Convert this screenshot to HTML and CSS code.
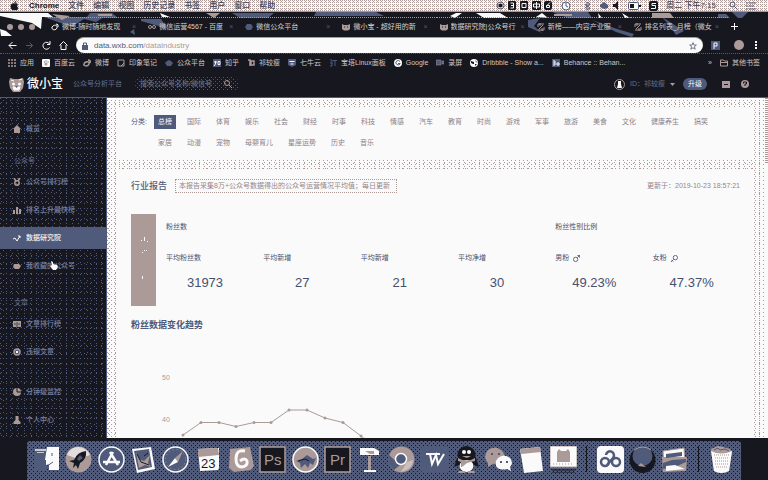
FILE: index.html
```
<!DOCTYPE html>
<html lang="zh-CN">
<head>
<meta charset="utf-8">
<meta name="viewport" content="width=device-width, initial-scale=1">
<title>微小宝 - 数据研究院</title>
<link rel="stylesheet" href="styles.css">
</head>
<body>
<header class="menubar">
  <svg class="apple" width="9" height="10" viewBox="0 0 9 10"><path d="M4.500 2.600C5.500 2 7.300 2 8 3.200C6.600 4.200 6.900 6 8.300 6.700C7.700 8.400 6.700 9.700 5.700 9.300C4.800 8.900 4.300 8.900 3.500 9.300C2.200 9.800.6 7.500.6 5.400C.6 2.800 2.800 1.800 4.500 2.600ZM4.400 2.100C4.300 1 5.200.2 6.200 0C6.300 1.200 5.500 2 4.400 2.100Z"/></svg>
  <nav class="menus"><b>Chrome</b><span>文件</span><span>编辑</span><span>视图</span><span>历史记录</span><span>书签</span><span>用户</span><span>窗口</span><span>帮助</span></nav>
  <div class="status">
    <svg width="9" height="9" viewBox="0 0 9 9"><circle cx="4.500" cy="4.500" r="3.500" fill="none" stroke="#505a7a"/><circle cx="4.500" cy="4.500" r="2"/></svg>
    <svg width="9" height="9" viewBox="0 0 9 9"><rect width="8" height="9" rx="1"/><path d="M2.500 2h3v5h-3M3 4.500h2" stroke="#fafafa" fill="none"/></svg>
    <svg width="9" height="9" viewBox="0 0 9 9"><rect width="8" height="9" rx="1"/><path d="M2 2.500h4v4H2z" stroke="#fafafa" fill="none"/></svg>
    <svg width="9" height="9" viewBox="0 0 9 9"><rect width="9" height="9" rx="1"/><path d="M1.500 3h6v3h-6zM4.500 1v7" stroke="#fafafa" fill="none"/></svg>
    <svg width="9" height="9" viewBox="0 0 9 9"><rect width="8" height="9" rx="2"/><path d="M6 1.500L3 4.500M2.500 4.500h3v2h-3z" stroke="#fafafa" fill="none"/></svg>
    <svg class="wide" width="10" height="10" viewBox="0 0 10 10"><circle cx="5" cy="5" r="4" fill="#fafafa" stroke="#505a7a"/><path d="M5 2v3l2 1" stroke="#505a7a" fill="none"/></svg>
    <svg class="wide" width="7" height="10" viewBox="0 0 7 10"><path d="M1 3l5 4-3 2V1l3 2-5 4" stroke="#505a7a" fill="none"/></svg>
    <svg width="10" height="9" viewBox="0 0 10 9"><path d="M1 4l4-3 4 3v3L5 8 1 6z" fill="#505a7a"/></svg>
    <svg width="8" height="9" viewBox="0 0 8 9"><path d="M1 3h2l3-3v9L3 6H1z"/></svg>
    <svg class="wide" width="13" height="8" viewBox="0 0 13 8"><rect x=".5" y=".5" width="10" height="7" rx="1" fill="#fafafa" stroke="#505a7a"/><path d="M2 2h4v4H2zM11 3h2v2h-2z"/></svg>
    <svg width="9" height="10" viewBox="0 0 9 10"><rect width="9" height="10" rx="2"/><path d="M7 2.500H3v2h3.500v3H2" stroke="#fafafa" fill="none"/></svg>
    <time>周二 下午7:15</time>
    <svg class="wide" width="9" height="9" viewBox="0 0 9 9"><circle cx="3.500" cy="3.500" r="2.500" fill="none" stroke="#505a7a"/><path d="M5.500 5.500L8.500 8.500" stroke="#505a7a"/></svg>
    <svg width="10" height="8" viewBox="0 0 10 8"><path d="M0 1h2M3 1h7M0 4h2M3 4h5M0 7h2M3 7h7" stroke="#505a7a"/></svg>
  </div>
</header>

<section class="tabstrip">
  <svg class="wallpaper" viewBox="0 0 768 25" preserveAspectRatio="none" aria-hidden="true">
    <path fill="#fafafa" d="M0 1h48l5 4H42l-1 12-9-6-18-4-14-3zM0 17l6 2 6 5H1zM160 1l10 4h-8zM450 4l6-3h6l-7 5zM476 1h24l8 5h-24zM536 5l6-4 6 5zM598 1l4 5h-3zM622 1l8 5h-5z"/>
    <path fill="#505a7a" d="M90 1h22l6 5H86zM44 5h60l-8 5-12-3-12 8zM141 7h20l7 10-13-4-14-4zM130 20l4-3 1 6zM232 1h42l-6 5h-28zM316 0h60l8 4h-70zM552 0h36l4 6h-24zM528 8l12-2-6 8 8 7-14-6zM592 8l22 8 20 6-2 3-16-5zM662 5l22 14-8 4-6-9zM732 0h16l-6 6h-4zM718 2h8l4 4h-12z"/>
    <path fill="#ab9a98" d="M52 2l18 2-8 4zM98 2h14v2H98zM206 1h14l-6 5zM554 2h18v2h-18zM652 1h18l4 5h-22z"/>
  </svg>
  <div class="lights"><i></i><i></i><i></i></div>
  <div class="tabs">
    <button class="tab"><svg viewBox="0 0 8 8"><path d="M1 4c2-3 6-2 5 1s-6 2-5-1M5 1q3 0 2 3" fill="none" stroke="#fafafa"/></svg><span>微博-随时随地发现</span><em>×</em></button>
    <button class="tab"><svg viewBox="0 0 8 8"><circle cx="2" cy="4" r="1.500" fill="none" stroke="#ab9a98"/><circle cx="6" cy="4" r="1.500" fill="none" stroke="#ab9a98"/></svg><span>微信运营4567 - 百度</span><em>×</em></button>
    <button class="tab"><svg viewBox="0 0 8 8"><path d="M0 4l2-3h4l2 3-2 3H2z" fill="#505a7a"/></svg><span>微信公众平台</span><em>×</em></button>
    <button class="tab"><svg viewBox="0 0 8 8"><path d="M0 1l2 1h4l2-1v5L6 7.500H2L0 6z" fill="#ab9a98"/><path d="M2 4h1M5 4h1" stroke="#17181f"/></svg><span>微小宝 - 超好用的新</span><em>×</em></button>
    <button class="tab"><svg viewBox="0 0 8 8"><path d="M0 1l2 1h4l2-1v5L6 7.500H2L0 6z" fill="#ab9a98"/><path d="M2 4h1M5 4h1" stroke="#17181f"/></svg><span>数据研究院|公众号行</span><em>×</em></button>
    <button class="tab"><svg viewBox="0 0 8 8"><path d="M1 4V1h6M7 4v3H1M3 0v3M5 5v3M6 2L2 6" fill="none" stroke="#ab9a98"/></svg><span>新榜——内容产业服</span><em>×</em></button>
    <button class="tab"><svg viewBox="0 0 8 8"><path d="M1 4V1h6M7 4v3H1M3 0v3M5 5v3M6 2L2 6" fill="none" stroke="#ab9a98"/></svg><span>排名列表_月榜（微女</span><em>×</em></button>
  </div>
  <button class="newtab" aria-label="新标签页"><svg width="7" height="7" viewBox="0 0 7 7"><path d="M3.500 0v7M0 3.500h7" stroke="#fafafa"/></svg></button>
</section>

<section class="toolbar">
  <div class="nav">
    <button aria-label="后退"><svg viewBox="0 0 9 9"><path d="M8.500 4.500H1M4.500 1L1 4.500 4.500 8" fill="none" stroke="#fafafa"/></svg></button>
    <button aria-label="前进"><svg viewBox="0 0 9 9"><path d="M1 4.500h7M4.500 1.500l3 3-3 3" fill="none" stroke="#505a7a"/></svg></button>
    <button aria-label="刷新"><svg viewBox="0 0 9 9"><path d="M7.500 3A3.500 3.500 0 1 0 7.500 6.500M8 0v3.500H5" fill="none" stroke="#fafafa"/></svg></button>
    <button aria-label="主页"><svg viewBox="0 0 9 9"><path d="M.5 4.500l4-4 4 4M2 4v4.500h5V4" fill="none" stroke="#fafafa"/></svg></button>
  </div>
  <form class="address">
    <svg width="6" height="8" viewBox="0 0 6 8"><path d="M1.500 4V1h3v3" fill="none" stroke="#505a7a"/><path d="M0 3h6v5H0z" fill="#505a7a"/></svg>
    <label class="url"><span><b>data.wxb.com</b>/dataindustry</span><input type="text" aria-label="地址"></label>
    <svg width="8" height="8" viewBox="0 0 10 10"><path d="M5 .8l1.200 3h3L6.800 5.800l.9 3.200L5 7.200 2.300 9l.9-3.200L.8 3.800h3z" fill="none" stroke="#505a7a"/></svg>
  </form>
  <svg class="ext" width="9" height="9" viewBox="0 0 9 9"><path d="M0 0h9v9H0z" fill="#505a7a"/><path d="M3 8V2h3v3H3" fill="none" stroke="#fafafa"/></svg>
  <i class="me"></i>
  <svg width="2" height="8" viewBox="0 0 2 8"><path d="M0 0h2v2H0zM0 3h2v2H0zM0 6h2v2H0z" fill="#fafafa"/></svg>
</section>

<nav class="bookmarks">
  <a href="#"><svg viewBox="0 0 8 8"><path d="M0 1h8M0 4h8M0 7h8" stroke="#ab9a98" stroke-width="1.500" stroke-dasharray="2 1"/></svg>应用</a>
  <a href="#"><svg viewBox="0 0 8 8"><rect width="8" height="8" rx="1" fill="#fafafa"/><circle cx="4" cy="5" r="1.500" fill="#ab9a98"/><path d="M2 3h1M3.500 2h1M5.500 3h1" stroke="#505a7a"/></svg>百度云</a>
  <a href="#"><svg viewBox="0 0 8 8"><path d="M1 5c1-3 6-3 5 0s-6 2-5 0M5 1q3 0 2 3" fill="none" stroke="#ab9a98" stroke-width="1.500"/></svg>微博</a>
  <a href="#"><svg viewBox="0 0 8 8"><path d="M1 1h6v6H1zM4 7l3-3" fill="none" stroke="#ab9a98"/></svg>印象笔记</a>
  <a href="#"><svg viewBox="0 0 8 8"><path d="M0 4l2-2 2-1 2 1 2 2-2 3H2z" fill="#505a7a"/></svg>公众平台</a>
  <a href="#"><svg viewBox="0 0 8 8"><path d="M0 0h8v8H0z" fill="#505a7a"/><path d="M1 3h3M2.500 2v3L1 7M5 2.500h2v3H5z" fill="none" stroke="#fafafa"/></svg>知乎</a>
  <a href="#"><svg viewBox="0 0 8 8"><path d="M1 1h2v6M4 2h3v4H4z" fill="none" stroke="#ab9a98" stroke-width="1.500"/></svg>祁较瘦</a>
  <a href="#"><svg viewBox="0 0 8 8"><path d="M0 0h8v6L4 8 0 6z" fill="#505a7a"/><path d="M1.500 2.500h5M2.500 5h3" stroke="#fafafa"/></svg>七牛云</a>
  <a href="#"><svg viewBox="0 0 8 8"><path d="M1 1h2v6H1M1 4h2M4 1.500h4M6 1v6" fill="none" stroke="#505a7a"/></svg>宝塔Linux面板</a>
  <a href="#"><svg viewBox="0 0 8 8"><circle cx="4" cy="4" r="4" fill="#fafafa"/><path d="M6 2.500a2.200 2.200 0 1 0 .2 2H4" fill="none" stroke="#505a7a"/></svg>Google</a>
  <a href="#"><svg viewBox="0 0 8 8"><path d="M0 1h5v5H0zM6 2h2v3H6z" fill="#505a7a" stroke="#ab9a98" stroke-width=".5"/></svg>录屏</a>
  <a href="#"><svg viewBox="0 0 8 8"><circle cx="4" cy="4" r="4" fill="#fafafa"/><path d="M1 2l3 1v2H3L1 4M5 1l1 2 2 1M5 5h2L5 7z" fill="#17181f"/></svg>Dribbble - Show a...</a>
  <a href="#"><svg viewBox="0 0 8 8"><path d="M0 0h8v8H0z" fill="#505a7a"/><path d="M1 2h2v4H1M1 4h2M5 4h2v2H5z" fill="none" stroke="#fafafa"/></svg>Behance :: Behan...</a>
  <span class="more">»</span>
  <a href="#"><svg viewBox="0 0 8 8"><path d="M.5 1h3l1 1h3v5h-7zM.5 3.500h7" fill="none" stroke="#ab9a98"/></svg>其他书签</a>
</nav>

<header class="site">
  <svg width="15" height="15" viewBox="0 0 15 15"><path d="M1 1l4 1h5l4-1 1 4-1 6-3 4H4L1 11 0 5z" fill="#ab9a98"/><path d="M2 3l3 1M10 3l3-1M4 10h7l-1 3H5z" fill="#fafafa" stroke="#fafafa"/><circle cx="4.500" cy="7" r="1.500" fill="#fafafa"/><circle cx="10.500" cy="7" r="1.500" fill="#fafafa"/><path d="M6 9h3l-1.500 2z" fill="#505a7a"/></svg>
  <strong>微小宝</strong>
  <span class="tagline">公众号分析平台</span>
  <form class="search">
    <input type="text" placeholder="搜索公众号名称/微信号" aria-label="搜索公众号">
    <svg width="8" height="8" viewBox="0 0 8 8"><circle cx="3" cy="3" r="2.500" fill="none" stroke="#ab9a98"/><path d="M5 5l3 3" stroke="#ab9a98"/></svg>
  </form>
  <div class="user">
    <svg width="11" height="11" viewBox="0 0 11 11"><circle cx="5.500" cy="5.500" r="5" fill="#17181f" stroke="#ab9a98"/><path d="M4 2h3v3l1 4H3l1-4z" fill="#fafafa"/></svg>
    <span>ID：祁较瘦</span>
    <svg width="5" height="3" viewBox="0 0 5 3"><path d="M0 0h5L2.500 3z" fill="#ab9a98"/></svg>
    <button class="upgrade">升级</button>
    <svg class="msg" width="8" height="7" viewBox="0 0 8 7"><path d="M0 0h8v7H0z" fill="#ab9a98"/><path d="M2 3.500h4" stroke="#17181f"/></svg>
    <svg width="8" height="8" viewBox="0 0 8 8"><circle cx="4" cy="4" r="4" fill="#ab9a98"/><path d="M2.500 3.500V2h3v2H4v2" fill="none" stroke="#17181f"/></svg>
  </div>
</header>

<div class="workspace">
  <nav class="sidebar">
    <a href="#"><svg viewBox="0 0 8 8"><path d="M0 4l4-4 4 4H7v4H1V4z"/></svg>概览</a>
    <h2>公众号</h2>
    <a href="#"><svg viewBox="0 0 8 8"><path d="M1 0l2 3M7 0L5 3" stroke="#ab9a98" stroke-width="1.500"/><circle cx="4" cy="5" r="2.200" fill="none" stroke="#ab9a98" stroke-width="1.500"/></svg>公众号排行榜</a>
    <a href="#"><svg viewBox="0 0 8 8"><path d="M0 4h2v4H0zM3 1h2v7H3zM6 3h2v5H6z"/></svg>排名上升最快榜</a>
    <a class="active" href="#" aria-current="page"><svg viewBox="0 0 8 8"><path d="M0 5l2-1 2 3 3-5M5 2h2v2" fill="none" stroke="#fafafa"/></svg>数据研究院</a>
    <a href="#" class="fav"><svg viewBox="0 0 8 8"><path d="M1 2h5l2 2-2 3H2L0 5z"/></svg>我收藏的公众号
      <svg class="cursor" viewBox="0 0 8 9"><path d="M1 0l2 1v2l4 1 1 2-2 3H3L0 5l2-1z" fill="#fafafa"/></svg></a>
    <h2>文章</h2>
    <a href="#"><svg viewBox="0 0 8 8"><path d="M0 1h8v6H0z"/><path d="M4 2v5M2 3v2M6 3v2" stroke="#17181f" stroke-width=".7"/></svg>文章排行榜</a>
    <a href="#"><svg viewBox="0 0 8 8"><circle cx="4" cy="4" r="3" fill="#505a7a" stroke="#ab9a98" stroke-width="1.500"/><path d="M3 3h2v2H3z" fill="#fafafa"/></svg>违规文章</a>
    <a class="apart" href="#"><svg viewBox="0 0 8 8"><circle cx="4" cy="4" r="4"/><path d="M4 0v4h4" fill="none" stroke="#17181f"/></svg>分钟级监控</a>
    <a href="#"><svg viewBox="0 0 8 8"><path d="M2.500 0h3v4l2 2v2h-7V6l2-2z"/></svg>个人中心</a>
  </nav>
  <main>
    <section class="card filter">
      <span class="filter-name">分类:</span>
      <div class="chips"><button class="on">总榜</button><button>国际</button><button>体育</button><button>娱乐</button><button>社会</button><button>财经</button><button>时事</button><button>科技</button><button>情感</button><button>汽车</button><button>教育</button><button>时尚</button><button>游戏</button><button>军事</button><button>旅游</button><button>美食</button><button>文化</button><button>健康养生</button><button>搞笑</button><button>家居</button><button>动漫</button><button>宠物</button><button>母婴育儿</button><button>星座运势</button><button>历史</button><button>音乐</button></div>
    </section>
    <section class="card report">
      <header><h1>行业报告</h1><p>本报告采集8万+公众号数据得出的公众号运营情况平均值；每日更新</p><time>更新于：2019-10-23 18:57:21</time></header>
      <div class="summary">
        <div class="block"><svg width="10" height="46" viewBox="0 0 10 46"><path d="M5 0h1v4H5zM2 3h1v1H2zM8 4h1v1H8zM5 13h1v1H5zM7 13h1v1H7zM3 15h1v1H3zM3 39h1v3H3z" fill="#fafafa"/></svg></div>
        <dl class="stats">
          <div class="group wide4"><h3>粉丝数</h3></div>
          <div class="group wide2"><h3>粉丝性别比例</h3></div>
          <div><dt>平均粉丝数</dt><dd>31973</dd></div>
          <div><dt>平均新增</dt><dd>27</dd></div>
          <div><dt>平均新增</dt><dd>21</dd></div>
          <div><dt>平均净增</dt><dd>30</dd></div>
          <div><dt>男粉 <svg viewBox="0 0 8 8"><circle cx="3" cy="5" r="2.500"/><path d="M5 3l2.500-2.500M5 .5h2.500V3"/></svg></dt><dd>49.23%</dd></div>
          <div><dt>女粉 <svg viewBox="0 0 8 8"><circle cx="5" cy="3" r="2.500"/><path d="M3 5L0 8M.5 5.500l2 2"/></svg></dt><dd>47.37%</dd></div>
        </dl>
      </div>
      <h2>粉丝数据变化趋势</h2>
      <svg class="chart" width="610" height="120" viewBox="0 0 610 120">
        <text x="31" y="44">50</text><text x="31" y="86">40</text>
        <path d="M52 99L70 86.500H88L105 90.500L123 86.500H140L158 74H176L194 82L212 86.500L230 100L248 115"/>
        <g><circle cx="52" cy="99" r="1.500"/><circle cx="70" cy="86.500" r="1.500"/><circle cx="88" cy="86.500" r="1.500"/><circle cx="105" cy="90.500" r="1.500"/><circle cx="123" cy="86.500" r="1.500"/><circle cx="140" cy="86.500" r="1.500"/><circle cx="158" cy="74" r="1.500"/><circle cx="176" cy="74" r="1.500"/><circle cx="194" cy="82" r="1.500"/><circle cx="212" cy="86.500" r="1.500"/><circle cx="230" cy="100" r="1.500"/></g>
      </svg>
    </section>
  </main>
  <i class="thumb"></i>
</div>

<footer class="dock">
  <svg viewBox="0 0 27 27"><path d="M1 2h12v23H2z" fill="#505a7a"/><path d="M2 3h11v2H2zM4 6h7v1H4z" fill="#fafafa" opacity=".7"/><path d="M14 1h12v23H16v-5h-3v-5h-1z" fill="#fafafa"/><path d="M19 7v3M4 17q8 6 16-1" stroke="#505a7a" fill="none"/></svg>
  <svg viewBox="0 0 27 27"><circle cx="13.500" cy="13.500" r="13" fill="#ab9a98"/><path d="M2 9Q5 1 13 1t12 8l-12 4z" fill="#fafafa" opacity=".7"/><path d="M21 5q-9 1-12 9l-5 1 5 2-1 5 3-3 2 4 2-6q7-4 6-12z" fill="#17181f"/><path d="M15 9l3 3-4 3-2-2z" fill="#505a7a"/></svg>
  <svg viewBox="0 0 27 27"><circle cx="13.500" cy="13.500" r="12.500" fill="#505a7a" stroke="#fafafa" stroke-width="1.500"/><path d="M15 6L8 19M12 6l8 13M5 16h17" fill="none" stroke="#fafafa" stroke-width="2.500"/></svg>
  <svg viewBox="0 0 27 27"><path d="M2 3l19-2 4 22-18 4z" fill="#fafafa"/><path d="M4 5l15-2 3 18-14 3z" fill="#505a7a"/><path d="M6 6l3 7 5 2 6-6-2 8 3 4-6-2-6 3z" fill="#ab9a98"/><path d="M7 8l4 8 8 3M14 10l4-3" stroke="#17181f" fill="none"/></svg>
  <svg viewBox="0 0 27 27"><circle cx="13.500" cy="13.500" r="12.500" fill="#505a7a" stroke="#fafafa" stroke-width="1.500"/><path d="M21 5l-5 11-3-4z" fill="#ab9a98"/><path d="M13 12l3 4-10 5z" fill="#fafafa"/><circle cx="13.500" cy="13.500" r="10" fill="none" stroke="#ab9a98" stroke-dasharray="1 3"/></svg>
  <svg viewBox="0 0 27 27"><path d="M3 3l21-1v20l-1 2-18 1z" fill="#fafafa"/><path d="M3 3l20-1 1 7-21 2z" fill="#ab9a98"/><text x="6" y="22" font-size="13" fill="#17181f">23</text></svg>
  <svg viewBox="0 0 27 27"><path d="M3 3l20-2 4 19-3 4-17 2-5-4z" fill="#ab9a98"/><path d="M18 5q-9-2-9 8 0 8 6 8 6-1 5-6-2-4-7 0" fill="none" stroke="#fafafa" stroke-width="3"/></svg>
  <svg viewBox="0 0 27 27"><rect x="1" y="1" width="25" height="25" fill="#17181f" stroke="#ab9a98" stroke-width="1.500"/><text x="5" y="19" font-size="15" fill="#ab9a98">Ps</text></svg>
  <svg viewBox="0 0 27 27"><circle cx="13.500" cy="13.500" r="12.500" fill="#ab9a98" stroke="#fafafa" stroke-width="1.500"/><path d="M4 15l6-2 5-4 6 4 3-1-3 7-3-2-2 5-3-4-4 4-1-5z" fill="#505a7a"/><path d="M6 15l7-2 4 2" stroke="#17181f" fill="none"/></svg>
  <svg viewBox="0 0 27 27"><rect x="1" y="1" width="25" height="25" fill="#17181f" stroke="#ab9a98" stroke-width="1.500"/><text x="6" y="19" font-size="15" fill="#ab9a98">Pr</text></svg>
  <svg viewBox="0 0 27 27"><path d="M4 2h14l5 3v4H4z" fill="#fafafa"/><path d="M9 5h9v3h-4z" fill="#ab9a98"/><path d="M12 10h3v14h-3z" fill="#ab9a98"/><path d="M8 24h12v2H8z" fill="#fafafa"/></svg>
  <svg viewBox="0 0 27 27"><circle cx="13.500" cy="13.500" r="13" fill="#ab9a98"/><path d="M1 9Q-2 18 6 24l6-5z" fill="#505a7a"/><path d="M25 14q0 9-12 12l6-10z" fill="#fafafa" opacity=".4"/><circle cx="13" cy="13" r="5.500" fill="#505a7a" stroke="#fafafa" stroke-width="1.500"/></svg>
  <svg viewBox="0 0 27 27"><rect width="27" height="27" rx="3" fill="#505a7a"/><path d="M5 8h4l2 10 4-9 2 9 6-10M9 8h10" fill="none" stroke="#fafafa" stroke-width="2"/></svg>
  <svg viewBox="0 0 27 27"><ellipse cx="13.500" cy="9" rx="9" ry="9" fill="#17181f"/><path d="M4 12h19l3 9-5-2-2 6H8l-2-6-5 2z" fill="#17181f"/><ellipse cx="13.500" cy="20" rx="7" ry="6" fill="#fafafa"/><path d="M5 12q9 5 17 0v3l-8 2-5 4H8v-5l-3-1zM6 25h6v2H5zM15 25h6l1 2h-7z" fill="#ab9a98"/><circle cx="11" cy="6" r="2" fill="#fafafa"/><circle cx="16" cy="6" r="2" fill="#fafafa"/><path d="M9 10h9l-4 2z" fill="#ab9a98"/></svg>
  <svg viewBox="0 0 27 27"><path d="M3 4q8-6 15 2 4 6-3 11l-7 1-5 3V17q-6-6 0-13z" fill="#ab9a98"/><path d="M13 12q6-5 12 0 4 5 0 9l1 4-4-2q-8 2-11-3-1-5 2-8z" fill="#fafafa"/><path d="M6 7h2v2H6zM13 7h2v2h-2zM15 15h2v2h-2zM21 15h2v2h-2z" fill="#505a7a"/></svg>
  <svg viewBox="0 0 27 27"><path d="M2 3l20-2 3 24-19 2z" fill="#fafafa"/><path d="M2 3l20-2 1 5L3 8z" fill="#ab9a98"/></svg>
  <svg viewBox="0 0 27 27"><path d="M0 0h27v21H0z" fill="#fafafa" stroke="#ab9a98"/><path d="M7 16V6l2-3 2 2h5l2-2 2 3v10z" fill="#ab9a98"/><path d="M2 24h23M2 27h23" stroke="#17181f"/><path d="M3 18h21" stroke="#ab9a98" stroke-dasharray="1 2"/></svg>
  <i></i>
  <svg viewBox="0 0 27 27"><rect width="27" height="27" rx="4" fill="#fafafa"/><g fill="none" stroke="#505a7a" stroke-width="2.500"><circle cx="8" cy="16" r="4"/><circle cx="19" cy="16" r="4"/><path d="M9 9a4 4 0 1 1 7 3l-6 7"/></g></svg>
  <svg viewBox="0 0 27 27"><circle cx="13.500" cy="14" r="13" fill="#17181f"/><circle cx="13.500" cy="10" r="10" fill="#505a7a"/><path d="M5 4q9-6 17 0" fill="none" stroke="#ab9a98"/><path d="M9 20l3-3 5 4z" fill="#ab9a98"/></svg>
  <svg viewBox="0 0 27 27"><path d="M2 5l21-3 1 16-21 4z" fill="#fafafa" stroke="#ab9a98"/><path d="M1 11h25l-1 14-23 1z" fill="#ab9a98"/><path d="M5 8l16-2v4L5 12zM2 17l9-3 14-1v3l-11 5-12 2z" fill="#505a7a"/><path d="M5 20l9-1 10 4-19 2z" fill="#fafafa"/></svg>
  <i></i>
  <svg viewBox="0 0 27 27"><path d="M3 3l7-3 5 1 7 2 2 3-3 19q-8 4-15 0z" fill="#ab9a98"/><path d="M3 5q10 5 21 0l-3 20q-8 4-15 0z" fill="#fafafa"/><path d="M6 9h15M7 12h14M7 15h13M7 18h13M8 21h11" stroke="#ab9a98" stroke-dasharray="1 1"/><path d="M6 4l4-2 2 2 5-1 4 2" fill="none" stroke="#505a7a"/></svg>
</footer>
</body>
</html>
```

FILE: styles.css
```
:root {
  --ink: #17181f;
  --blue: #505a7a;
  --taupe: #ab9a98;
  --paper: #fafafa;
}

* { box-sizing: border-box; }

body {
  margin: 0;
  height: 100vh;
  display: flex;
  flex-direction: column;
  overflow: hidden;
  background: var(--ink);
  color: var(--blue);
  font: 7px/10px "Liberation Sans", "Noto Sans CJK SC", sans-serif;
}

h1, h2, h3, p, dl, dd, form { margin: 0; }
a { color: inherit; text-decoration: none; }
button, input { font: inherit; color: inherit; background: none; border: 0; padding: 0; }
svg { flex: none; display: block; }
em, i { font-style: normal; }

/* System menu bar */
.menubar {
  flex: none;
  height: 12px;
  display: flex;
  align-items: center;
  padding: 0 12px 0 10px;
  font-size: 8px;
  font-weight: 500;
  color: #3c4460;
  border-bottom: 1px solid var(--taupe);
  background-color: var(--paper);
  background-image: conic-gradient(at 1px 1px, transparent 75%, var(--taupe) 0), conic-gradient(at 1px 1px, transparent 75%, var(--taupe) 0);
  background-size: 2px 2px, 4px 4px;
  background-position: 0 0, 1px 1px;
}
.menubar svg { fill: var(--ink); }
.menus { display: flex; gap: 9px; margin-left: 10px; }
.menus b { color: var(--ink); }
.status { display: flex; align-items: center; gap: 3px; margin-left: auto; }
.status .wide { margin: 0 5px; }
.status time { margin: 0 5px; }

/* Browser tabs */
.tabstrip {
  flex: none;
  height: 25px;
  display: flex;
  align-items: center;
  padding-top: 4px;
  padding-left: 7px;
  position: relative;
}
.wallpaper { position: absolute; inset: 0; width: 100%; height: 100%; z-index: -1; }
.lights { display: flex; gap: 5px; width: 41px; }
.lights i { width: 6px; height: 6px; border-radius: 50%; background: var(--taupe); }
.tabs { display: flex; flex: 0 1 680px; min-width: 0; }
.tab {
  flex: 1 1 0;
  min-width: 0;
  height: 19px;
  display: flex;
  align-items: center;
  gap: 3px;
  padding: 0 9px 0 3px;
  color: #d8d0d0;
  border-top: 1px dotted var(--taupe);
}
.tab svg { width: 8px; height: 8px; }
.tab span { flex: 1; overflow: hidden; white-space: nowrap; text-align: left; }
.tab em { color: var(--blue); }
.newtab { margin-left: 3px; }

/* Address row */
.toolbar { flex: none; height: 16px; display: flex; align-items: center; padding-right: 11px; }
.nav { display: flex; gap: 8px; padding: 0 8px; }
.nav svg { width: 9px; height: 9px; }
.address {
  flex: 1;
  height: 16px;
  display: flex;
  align-items: center;
  gap: 6px;
  padding: 0 6px;
  border-radius: 8px;
  border-top: 1px solid var(--taupe);
  background: var(--paper);
}
.url { flex: 1; display: flex; font-size: 8px; color: var(--taupe); }
.url b { font-weight: 400; color: var(--blue); }
.url input { flex: 1; min-width: 0; outline: 0; }
.ext { margin: 0 14px 0 8px; }
.me { width: 10px; height: 10px; border-radius: 50%; background: var(--taupe); margin-right: 11px; }

/* Bookmarks */
.bookmarks {
  flex: none;
  height: 18px;
  display: flex;
  align-items: center;
  gap: 8px;
  padding: 0 8px;
  color: #d0c6c5;
  white-space: nowrap;
  border-top: 1px dotted var(--blue);
}
.bookmarks a { display: flex; align-items: center; gap: 4px; }
.bookmarks svg { width: 8px; height: 8px; }
.more { margin-left: auto; }

/* Site header */
.site { flex: none; height: 27px; display: flex; align-items: center; padding: 0 19px 0 9px; border-bottom: 1px solid var(--blue); }
.site strong { margin-left: 3px; font-size: 12px; line-height: 16px; font-weight: 500; color: var(--paper); }
.tagline { margin-left: 10px; color: #66708f; }
.search {
  display: flex;
  align-items: center;
  width: 104px;
  height: 14px;
  margin-left: 13px;
  padding: 0 7px 0 5px;
  border-radius: 7px;
  background-image: conic-gradient(at 1px 1px, transparent 75%, var(--blue) 0), conic-gradient(at 1px 1px, transparent 75%, var(--blue) 0);
  background-size: 4px 4px;
  background-position: 0 0, 2px 2px;
}
.search input { flex: 1; min-width: 0; }
.search input::placeholder { color: #6d7592; }
.user { display: flex; align-items: center; gap: 5px; margin-left: auto; color: #66708f; }
.upgrade { width: 24px; height: 12px; margin-left: 3px; border-radius: 6px; background: var(--blue); color: var(--paper); }
.msg { margin: 0 6px 0 10px; }

/* Workspace */
.workspace { flex: 1; min-height: 0; display: flex; position: relative; }
.sidebar {
  flex: none;
  width: 107px;
  padding-top: 20px;
  border-right: 1px solid var(--blue);
  background-image: conic-gradient(at 1px 1px, transparent 75%, var(--blue) 0), conic-gradient(at 1px 1px, transparent 75%, var(--blue) 0), conic-gradient(at 1px 1px, transparent 75%, var(--blue) 0);
  background-size: 6px 5px, 7px 6px, 5px 9px;
  background-position: 0 0, 3px 2px, 1px 4px;
}
.sidebar a { display: flex; align-items: center; gap: 5px; height: 22px; margin-bottom: 6px; padding-left: 13px; font-weight: 500; color: #7680a2; }
.sidebar a svg { width: 8px; height: 8px; fill: var(--taupe); }
.sidebar h2 { height: 14px; margin: 13px 0 3px 14px; font-size: 7px; line-height: 14px; font-weight: 400; color: #66708f; }
.sidebar a + h2 { margin-top: 14px; }
.sidebar .active { background: var(--blue); color: var(--paper); }
.sidebar .fav { position: relative; }
.sidebar .fav + h2 { margin-top: 19px; }
.sidebar a .cursor { position: absolute; left: 50px; top: 6px; height: 9px; }
.sidebar .apart { margin-top: 18px; }

main {
  flex: 1;
  min-width: 0;
  display: flex;
  flex-direction: column;
  gap: 10px;
  padding: 8px 11px 0 11px;
  border-right: 4px solid var(--paper);
  border-top: 2px solid var(--paper);
  background-color: var(--paper);
  background-image: conic-gradient(at 1px 1px, transparent 75%, var(--taupe) 0), conic-gradient(at 1px 1px, transparent 75%, var(--taupe) 0), conic-gradient(at 1px 1px, transparent 75%, var(--taupe) 0);
  background-size: 4px 4px, 5px 4px, 7px 5px;
  background-position: 0 0, 2px 2px, 1px 3px;
}
.card { background: var(--paper); padding: 0 13px; }
.filter { flex: none; display: flex; gap: 7px; padding: 7px 24px 10px 13px; }
.filter-name { width: 16px; line-height: 14px; white-space: nowrap; }
.chips { flex: 1; display: flex; flex-wrap: wrap; gap: 7px; color: #8d8088; }
.chips button { height: 14px; padding: 0 4px; line-height: 14px; }
.chips .on { background: var(--blue); color: var(--paper); }

.report { flex: 1; min-height: 0; overflow: hidden; padding-top: 8px; }
.report header { display: flex; align-items: center; gap: 8px; height: 15px; color: #94858a; }
.report h1, .report h2 { font-size: 9px; line-height: 12px; color: var(--blue); }
.report h1 { font-weight: 500; }
.report p { padding: 1px 6px 1px 3px; border: 1px dotted var(--taupe); }
.report time { margin-left: auto; }
.summary { display: flex; gap: 10px; margin-top: 21px; }
.block { flex: none; width: 25px; height: 92px; display: grid; place-items: center; background: var(--taupe); }
.stats { flex: 1; display: grid; grid-template-columns: repeat(6, 1fr); grid-template-rows: 30px 1fr; margin-right: -10px; padding-top: 8px; color: #474f6c; }
.wide4 { grid-column: span 4; }
.wide2 { grid-column: span 2; }
.stats h3 { font-size: 7px; line-height: 10px; font-weight: 400; }
.stats dt { display: flex; align-items: center; gap: 4px; height: 12px; }
.stats dt svg { width: 7px; height: 7px; fill: none; stroke: var(--blue); }
.stats dd { width: 78px; margin-top: 11px; font-size: 13px; line-height: 16px; text-align: center; }
.report h2 { margin-top: 13px; }
.chart { margin-top: 5px; font-size: 7px; fill: var(--taupe); }
.chart path { fill: none; stroke: var(--taupe); }
.thumb {
  position: absolute;
  right: 0;
  top: 0;
  width: 3px;
  height: 66px;
  background: repeating-linear-gradient(var(--taupe) 0 1px, var(--paper) 1px 2px);
}

/* Dock */
.dock {
  flex: none;
  height: 39px;
  display: flex;
  align-items: center;
  justify-content: space-between;
  margin: 3px 27px 0;
  padding: 0 6px 3px;
  border-radius: 3px 3px 0 0;
  background-color: var(--blue);
  background-image: conic-gradient(at 1px 1px, transparent 75%, var(--ink) 0), conic-gradient(at 1px 1px, transparent 75%, var(--ink) 0);
  background-size: 4px 4px;
  background-position: 0 0, 2px 2px;
}
.dock svg { width: 27px; height: 27px; }
.dock i { width: 1px; height: 26px; margin: 0 4px; background: var(--ink); }
```
